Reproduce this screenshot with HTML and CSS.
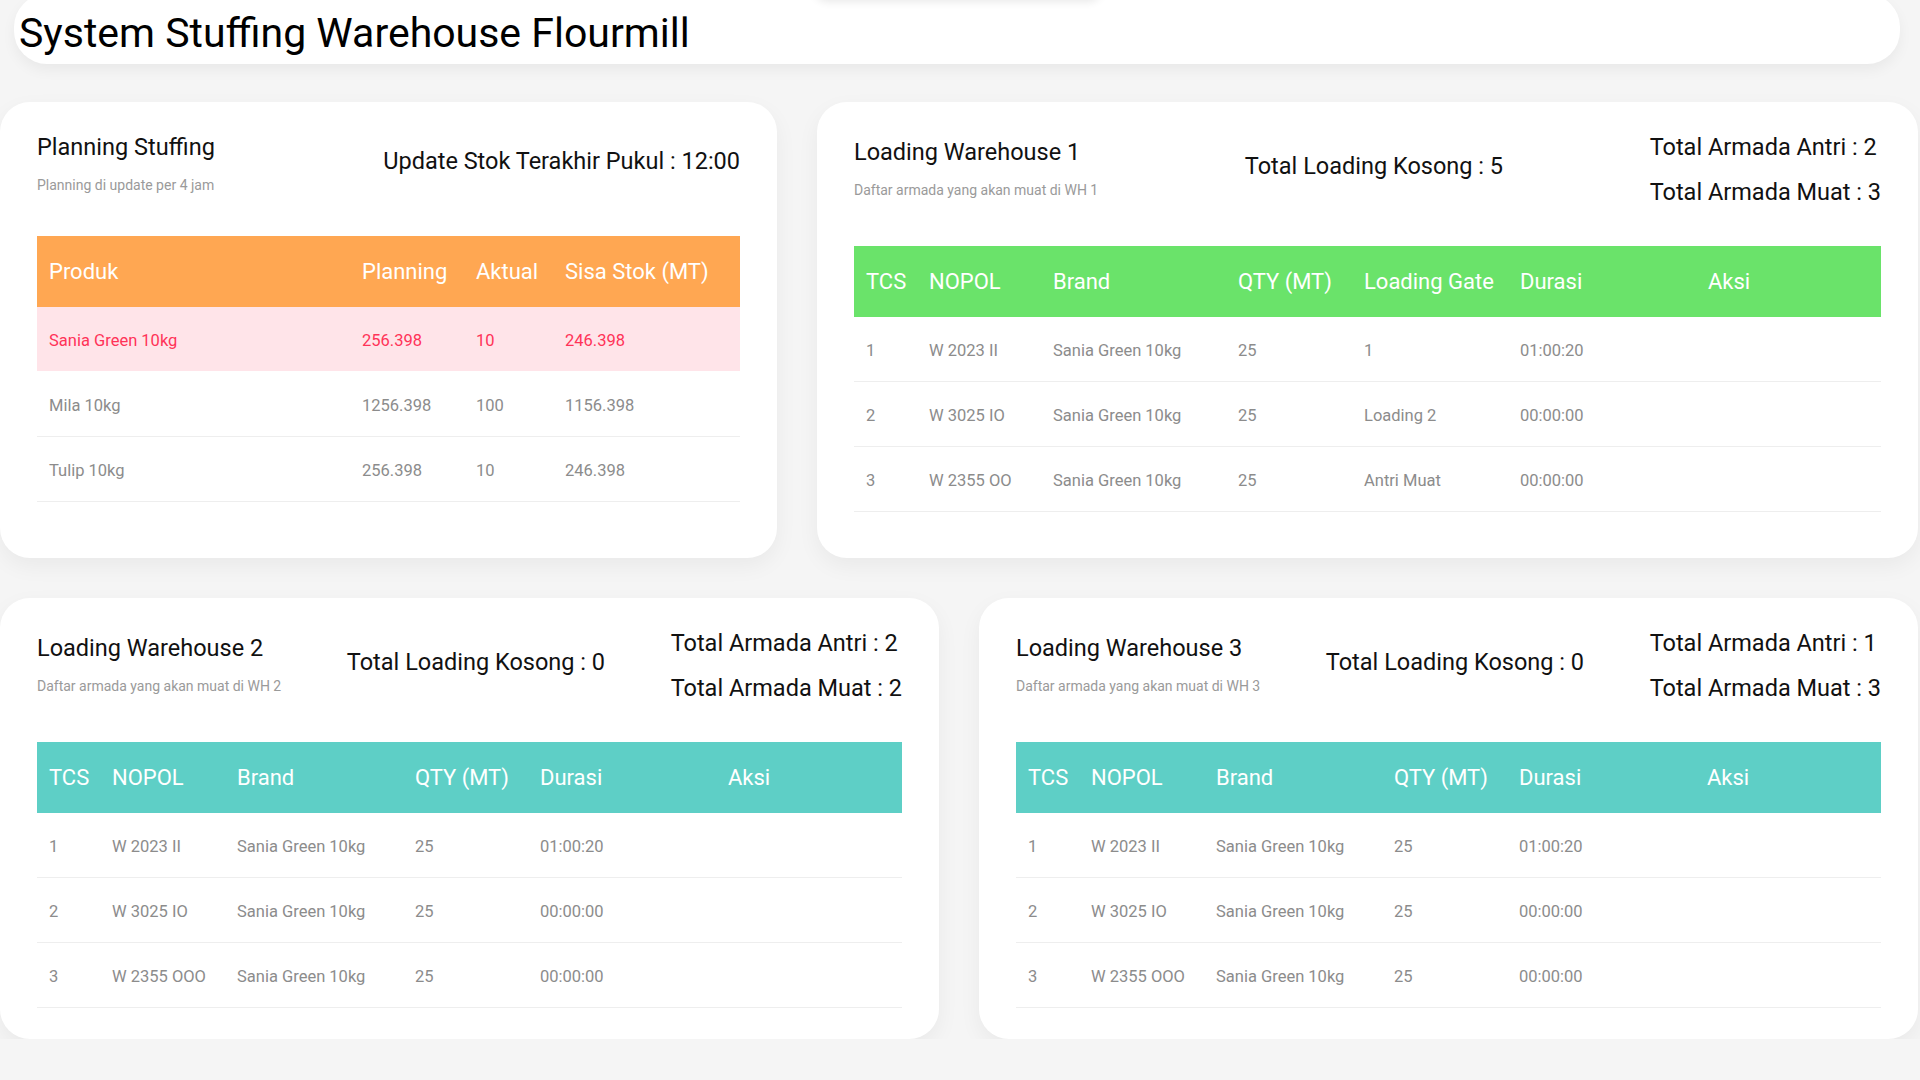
FILE: index.html
```html
<!DOCTYPE html>
<html lang="id">
<head>
<meta charset="utf-8">
<title>System Stuffing Warehouse Flourmill</title>
<link rel="stylesheet" href="styles.css">
</head>
<body>
<div class="peek"></div>
<header class="topbar">
  <h1>System Stuffing Warehouse Flourmill</h1>
</header>

<main class="dash">
  <div class="row row-top">
    <section class="card">
      <div class="card-head">
        <div class="head-title">
          <h4>Planning Stuffing</h4>
          <p class="sub">Planning di update per 4 jam</p>
        </div>
        <h4 class="mid">Update Stok Terakhir Pukul : 12:00</h4>
      </div>
      <table class="tbl tbl-orange">
        <colgroup><col class="p1"><col class="p2"><col class="p3"><col class="p4"></colgroup>
        <thead><tr><th>Produk</th><th>Planning</th><th>Aktual</th><th>Sisa Stok (MT)</th></tr></thead>
        <tbody>
          <tr class="alert"><td>Sania Green 10kg</td><td>256.398</td><td>10</td><td>246.398</td></tr>
          <tr><td>Mila 10kg</td><td>1256.398</td><td>100</td><td>1156.398</td></tr>
          <tr><td>Tulip 10kg</td><td>256.398</td><td>10</td><td>246.398</td></tr>
        </tbody>
      </table>
    </section>

    <section class="card">
      <div class="card-head">
        <div class="head-title">
          <h4>Loading Warehouse 1</h4>
          <p class="sub">Daftar armada yang akan muat di WH 1</p>
        </div>
        <h4 class="mid">Total Loading Kosong : 5</h4>
        <div class="stats">
          <h4>Total Armada Antri : 2</h4>
          <h4>Total Armada Muat : 3</h4>
        </div>
      </div>
      <table class="tbl tbl-green">
        <colgroup><col class="w1"><col class="w2"><col class="w3"><col class="w4"><col class="w5"><col class="w6"><col class="w7"></colgroup>
        <thead><tr><th>TCS</th><th>NOPOL</th><th>Brand</th><th>QTY (MT)</th><th>Loading Gate</th><th>Durasi</th><th>Aksi</th></tr></thead>
        <tbody>
          <tr><td>1</td><td>W 2023 II</td><td>Sania Green 10kg</td><td>25</td><td>1</td><td>01:00:20</td><td></td></tr>
          <tr><td>2</td><td>W 3025 IO</td><td>Sania Green 10kg</td><td>25</td><td>Loading 2</td><td>00:00:00</td><td></td></tr>
          <tr><td>3</td><td>W 2355 OO</td><td>Sania Green 10kg</td><td>25</td><td>Antri Muat</td><td>00:00:00</td><td></td></tr>
        </tbody>
      </table>
    </section>
  </div>

  <div class="row row-bottom">
    <section class="card">
      <div class="card-head">
        <div class="head-title">
          <h4>Loading Warehouse 2</h4>
          <p class="sub">Daftar armada yang akan muat di WH 2</p>
        </div>
        <h4 class="mid">Total Loading Kosong : 0</h4>
        <div class="stats">
          <h4>Total Armada Antri : 2</h4>
          <h4>Total Armada Muat : 2</h4>
        </div>
      </div>
      <table class="tbl tbl-teal">
        <colgroup><col class="t1"><col class="t2"><col class="t3"><col class="t4"><col class="t5"><col class="t6"></colgroup>
        <thead><tr><th>TCS</th><th>NOPOL</th><th>Brand</th><th>QTY (MT)</th><th>Durasi</th><th>Aksi</th></tr></thead>
        <tbody>
          <tr><td>1</td><td>W 2023 II</td><td>Sania Green 10kg</td><td>25</td><td>01:00:20</td><td></td></tr>
          <tr><td>2</td><td>W 3025 IO</td><td>Sania Green 10kg</td><td>25</td><td>00:00:00</td><td></td></tr>
          <tr><td>3</td><td>W 2355 OOO</td><td>Sania Green 10kg</td><td>25</td><td>00:00:00</td><td></td></tr>
        </tbody>
      </table>
    </section>

    <section class="card">
      <div class="card-head">
        <div class="head-title">
          <h4>Loading Warehouse 3</h4>
          <p class="sub">Daftar armada yang akan muat di WH 3</p>
        </div>
        <h4 class="mid">Total Loading Kosong : 0</h4>
        <div class="stats">
          <h4>Total Armada Antri : 1</h4>
          <h4>Total Armada Muat : 3</h4>
        </div>
      </div>
      <table class="tbl tbl-teal">
        <colgroup><col class="t1"><col class="t2"><col class="t3"><col class="t4"><col class="t5"><col class="t6"></colgroup>
        <thead><tr><th>TCS</th><th>NOPOL</th><th>Brand</th><th>QTY (MT)</th><th>Durasi</th><th>Aksi</th></tr></thead>
        <tbody>
          <tr><td>1</td><td>W 2023 II</td><td>Sania Green 10kg</td><td>25</td><td>01:00:20</td><td></td></tr>
          <tr><td>2</td><td>W 3025 IO</td><td>Sania Green 10kg</td><td>25</td><td>00:00:00</td><td></td></tr>
          <tr><td>3</td><td>W 2355 OOO</td><td>Sania Green 10kg</td><td>25</td><td>00:00:00</td><td></td></tr>
        </tbody>
      </table>
    </section>
  </div>
</main>
</body>
</html>
```

FILE: styles.css
```css
* { box-sizing: border-box; }

html, body {
  margin: 0;
  padding: 0;
}

body {
  background: #f5f5f5;
  font-family: Roboto, "Noto Sans", "Liberation Sans", sans-serif;
  color: #111;
  overflow: hidden;
  position: relative;
}

.peek {
  position: absolute;
  top: -50px;
  left: 814px;
  width: 288px;
  height: 50px;
  background: #fff;
  border-radius: 14px;
  box-shadow: 0 2px 8px rgba(0, 0, 0, 0.09);
  z-index: 2;
}

.topbar {
  margin: -6px 20px 0 14px;
  height: 70px;
  padding: 19px 0 0 5px;
  background: #fff;
  border-radius: 33px;
  box-shadow: 0 6px 14px rgba(0, 0, 0, 0.05);
}

.topbar h1 {
  margin: 0;
  font-size: 41px;
  font-weight: 400;
  line-height: 1;
  color: #000;
}

.dash {
  margin: 38px 2px 0 0;
  display: grid;
  row-gap: 40px;
}

.row {
  display: grid;
  column-gap: 40px;
}

.row-top { grid-template-columns: 777px 1fr; }
.row-top .card { min-height: 456px; }
.row-bottom { grid-template-columns: 1fr 1fr; }

.card {
  background: #fff;
  border-radius: 30px;
  padding: 31px 37px 31px;
  box-shadow: 0 8px 22px rgba(0, 0, 0, 0.05);
}

.card-head {
  display: flex;
  justify-content: space-between;
  align-items: center;
  margin-bottom: 40px;
}

.card-head h4 {
  margin: 0;
  font-size: 23.5px;
  font-weight: 400;
  line-height: 1.2;
  color: #111;
}

.head-title h4 { margin-bottom: 14px; }

.sub {
  margin: 0;
  font-size: 14px;
  line-height: 21px;
  color: #9a9a9a;
}

.card-head .mid { margin-bottom: 8px; }

.stats h4 + h4 { margin-top: 17px; }

.tbl {
  width: 100%;
  border-collapse: collapse;
  table-layout: fixed;
}

.tbl th {
  color: #fff;
  font-size: 22px;
  font-weight: 400;
  line-height: 34px;
  text-align: left;
  padding: 19px 12px 18px;
  white-space: nowrap;
}

.tbl td {
  font-size: 16.5px;
  line-height: 24px;
  color: #8c8c8c;
  padding: 22px 12px 18px;
  border-bottom: 1px solid #eeeeee;
  white-space: nowrap;
}

.tbl-orange th { background: #ffa752; }
.tbl-green th { background: #6ae36a; }
.tbl-teal th { background: #5ecfc6; }

.tbl tr.alert td {
  background: #ffe4e9;
  color: #ff3358;
  border-bottom-color: #fff;
}

.p1 { width: 313px; }
.p2 { width: 114px; }
.p3 { width: 89px; }
.p4 { width: 187px; }

.w1 { width: 63px; }
.w2 { width: 124px; }
.w3 { width: 185px; }
.w4 { width: 126px; }
.w5 { width: 156px; }
.w6 { width: 188px; }
.w7 { width: 185px; }

.t1 { width: 63px; }
.t2 { width: 125px; }
.t3 { width: 178px; }
.t4 { width: 125px; }
.t5 { width: 188px; }
.t6 { width: 186px; }
```
